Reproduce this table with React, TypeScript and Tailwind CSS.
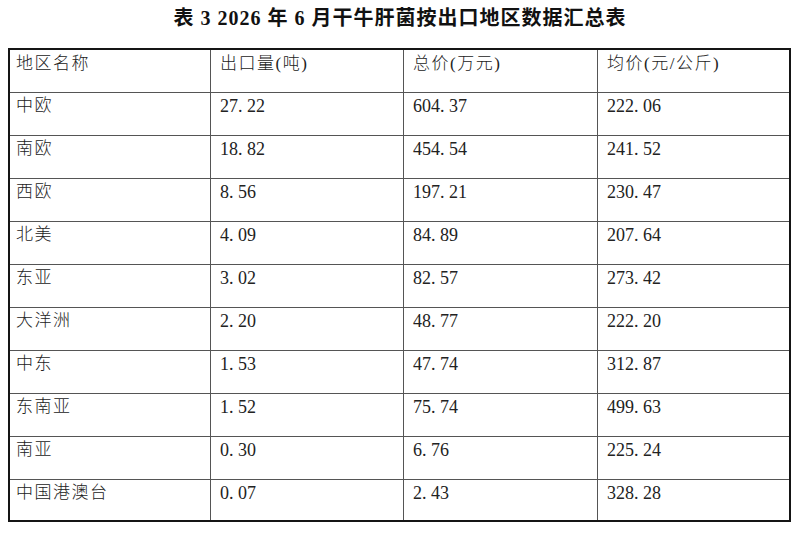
import React from "react";

const rows: [string, string, string, string][] = [
  ["中欧", "27.22", "604.37", "222.06"],
  ["南欧", "18.82", "454.54", "241.52"],
  ["西欧", "8.56", "197.21", "230.47"],
  ["北美", "4.09", "84.89", "207.64"],
  ["东亚", "3.02", "82.57", "273.42"],
  ["大洋洲", "2.20", "48.77", "222.20"],
  ["中东", "1.53", "47.74", "312.87"],
  ["东南亚", "1.52", "75.74", "499.63"],
  ["南亚", "0.30", "6.76", "225.24"],
  ["中国港澳台", "0.07", "2.43", "328.28"],
];

function Num({ v }: { v: string }) {
  const [a, b] = v.split(".");
  return (
    <div className="pl-[9px] pt-[4px] text-[18px] leading-[18px]">
      {a}
      <span className="inline-block w-[9px] text-left">.</span>
      {b}
    </div>
  );
}

function Cjk({ t, first }: { t: string; first?: boolean }) {
  return (
    <div
      className={
        first
          ? "pl-[6px] pt-[4px] text-[17px] leading-[18px] tracking-[1.5px] font-light"
          : "pl-[9px] pt-[4px] text-[17px] leading-[18px] tracking-[1.5px] font-light"
      }
    >
      {t}
    </div>
  );
}

export default function App() {
  return (
    <div className="w-[800px] h-[534px] bg-white text-[#222] font-['Liberation_Serif','Noto_Sans_CJK_SC',serif]">
      <div className="h-[48px] pt-[6px] text-center text-[20px] leading-[24px] font-bold tracking-[1px] text-[#111]">
        表 3 2026 年 6 月干牛肝菌按出口地区数据汇总表
      </div>
      <div className="ml-[8px] w-[783px] border-2 border-[#151515]">
        <div className="grid grid-cols-[200px_193px_194px_192px] h-[42px]">
          <div className="pl-[6px] pt-[5px] text-[17px] leading-[18px] tracking-[1.5px] font-light">地区名称</div>
          <div className="border-l border-[#555] pl-[9px] pt-[5px] text-[17px] leading-[18px] tracking-[1.5px] font-light">出口量(吨)</div>
          <div className="border-l border-[#555] pl-[9px] pt-[5px] text-[17px] leading-[18px] tracking-[1.5px] font-light">总价(万元)</div>
          <div className="border-l border-[#555] pl-[9px] pt-[5px] text-[17px] leading-[18px] tracking-[1.5px] font-light">均价(元/公斤)</div>
        </div>
        {rows.map((r, i) => (
          <div
            key={r[0]}
            className={
              i === rows.length - 1
                ? "grid grid-cols-[200px_193px_194px_192px] h-[41px] border-t border-[#555]"
                : "grid grid-cols-[200px_193px_194px_192px] h-[43px] border-t border-[#555]"
            }
          >
            <Cjk t={r[0]} first />
            <div className="border-l border-[#555]">
              <Num v={r[1]} />
            </div>
            <div className="border-l border-[#555]">
              <Num v={r[2]} />
            </div>
            <div className="border-l border-[#555]">
              <Num v={r[3]} />
            </div>
          </div>
        ))}
      </div>
    </div>
  );
}
